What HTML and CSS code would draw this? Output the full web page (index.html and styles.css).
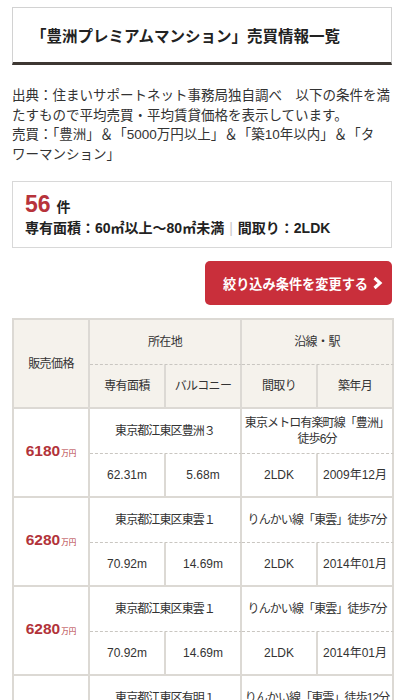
FILE: index.html
```html
<!DOCTYPE html>
<html lang="ja">
<head>
<meta charset="utf-8">
<title>「豊洲プレミアムマンション」売買情報一覧</title>
<link rel="stylesheet" href="styles.css">
</head>
<body>
<div class="page">
  <h1 class="title">「豊洲プレミアムマンション」売買情報一覧</h1>

  <p class="desc">出典：住まいサポートネット事務局独自調べ　以下の条件を満たすもので平均売買・平均賃貸価格を表示しています。<br>売買：「豊洲」＆「5000万円以上」＆「築10年以内」＆「タ<br>ワーマンション」</p>

  <div class="count-box">
    <div class="count"><span class="count-num">56</span><span class="count-unit">件</span></div>
    <div class="cond">専有面積：60㎡以上〜80㎡未満<span class="sep">|</span>間取り：2LDK</div>
  </div>

  <div class="btn-row">
    <a class="btn" href="#">絞り込み条件を変更する<svg class="chev" width="11" height="14" viewBox="0 0 11 14"><polyline points="2.5,2 8,7 2.5,12" fill="none" stroke="#fff" stroke-width="3.2" stroke-linecap="butt" stroke-linejoin="miter"/></svg></a>
  </div>

  <table class="list">
    <colgroup><col><col><col><col><col></colgroup>
    <thead>
      <tr class="r1">
        <th rowspan="2" class="price-h">販売価格</th>
        <th colspan="2" class="top">所在地</th>
        <th colspan="2" class="top">沿線・駅</th>
      </tr>
      <tr class="r2">
        <th>専有面積</th>
        <th>バルコニー</th>
        <th>間取り</th>
        <th>築年月</th>
      </tr>
    </thead>
    <tbody>
      <tr class="r1">
        <td rowspan="2" class="price"><span class="pn">6180</span><span class="pu">万円</span></td>
        <td colspan="2" class="top">東京都江東区豊洲３</td>
        <td colspan="2" class="top">東京メトロ有楽町線「豊洲」<br>徒歩6分</td>
      </tr>
      <tr class="r2">
        <td>62.31m</td>
        <td>5.68m</td>
        <td>2LDK</td>
        <td>2009年12月</td>
      </tr>
      <tr class="r1">
        <td rowspan="2" class="price"><span class="pn">6280</span><span class="pu">万円</span></td>
        <td colspan="2" class="top">東京都江東区東雲１</td>
        <td colspan="2" class="top">りんかい線「東雲」徒歩7分</td>
      </tr>
      <tr class="r2">
        <td>70.92m</td>
        <td>14.69m</td>
        <td>2LDK</td>
        <td>2014年01月</td>
      </tr>
      <tr class="r1">
        <td rowspan="2" class="price"><span class="pn">6280</span><span class="pu">万円</span></td>
        <td colspan="2" class="top">東京都江東区東雲１</td>
        <td colspan="2" class="top">りんかい線「東雲」徒歩7分</td>
      </tr>
      <tr class="r2">
        <td>70.92m</td>
        <td>14.69m</td>
        <td>2LDK</td>
        <td>2014年01月</td>
      </tr>
      <tr class="r1">
        <td rowspan="2" class="price"><span class="pn">6480</span><span class="pu">万円</span></td>
        <td colspan="2" class="top">東京都江東区有明１</td>
        <td colspan="2" class="top">りんかい線「東雲」徒歩12分</td>
      </tr>
      <tr class="r2">
        <td>68.40m</td>
        <td>10.12m</td>
        <td>2LDK</td>
        <td>2011年03月</td>
      </tr>
    </tbody>
  </table>
</div>
</body>
</html>
```

FILE: styles.css
```css
* { box-sizing: border-box; }
html, body { margin: 0; padding: 0; background: #fff; }
body {
  font-family: "Liberation Sans", "Noto Sans CJK JP", sans-serif;
  color: #333;
}
.page {
  padding: 7px 12px 0;
}
.title {
  margin: 0;
  height: 58px;
  display: flex;
  align-items: center;
  padding: 0 0 0 18px;
  border: 1px solid #d2d2d2;
  border-bottom: 3px solid #3d3732;
  font-size: 15.5px;
  font-weight: bold;
  color: #222;
}
.desc {
  margin: 21px 0 0;
  font-size: 13.5px;
  line-height: 19.5px;
  color: #333;
}
.count-box {
  margin-top: 17px;
  border: 1px solid #d8d8d8;
  padding: 8px 12px 9px;
}
.count {
  height: 28px;
  display: flex;
  align-items: baseline;
  line-height: 28px;
}
.count-num {
  font-size: 23px;
  font-weight: bold;
  color: #b7333b;
}
.count-unit {
  margin-left: 6px;
  font-size: 14px;
  font-weight: bold;
  color: #222;
}
.cond {
  font-size: 14px;
  line-height: 20px;
  font-weight: bold;
  color: #222;
}
.sep {
  color: #c8c8c8;
  font-weight: normal;
  margin: 0 5px;
}
.btn-row {
  display: flex;
  justify-content: flex-end;
  margin-top: 13px;
}
.btn {
  display: flex;
  align-items: center;
  width: 187px;
  height: 44px;
  padding: 0 0 0 18px;
  background: #c92f3b;
  border-radius: 5px;
  color: #fff;
  text-decoration: none;
  font-size: 13.2px;
  font-weight: bold;
}
.chev { margin-left: 4px; }
.list {
  margin-top: 13px;
  width: 380px;
  table-layout: fixed;
  border-collapse: separate;
  border-spacing: 0;
  border-top: 2px solid #dcd9d4;
  border-left: 2px solid #dcd9d4;
}
.list col { width: 76px; }
.list th, .list td {
  border-right: 2px solid #dcd9d4;
  border-bottom: 2px solid #dcd9d4;
  text-align: center;
  vertical-align: middle;
  font-size: 12px;
  line-height: 16px;
  font-weight: normal;
  color: #333;
  padding: 0 1px;
}
.list th { background: #f5f2ec; letter-spacing: -0.6px; }
.list td.top { letter-spacing: -0.9px; padding: 0; white-space: nowrap; }
.list tr.r1 { height: 45px; }
.list tr.r2 { height: 44px; }
.list .top { border-bottom: 1px dashed #c9c6c1; }
.price .pn {
  font-size: 15.5px;
  font-weight: bold;
  color: #b2333a;
}
.price .pu {
  font-size: 7.5px;
  color: #b2333a;
  margin-left: 1px;
}
```
